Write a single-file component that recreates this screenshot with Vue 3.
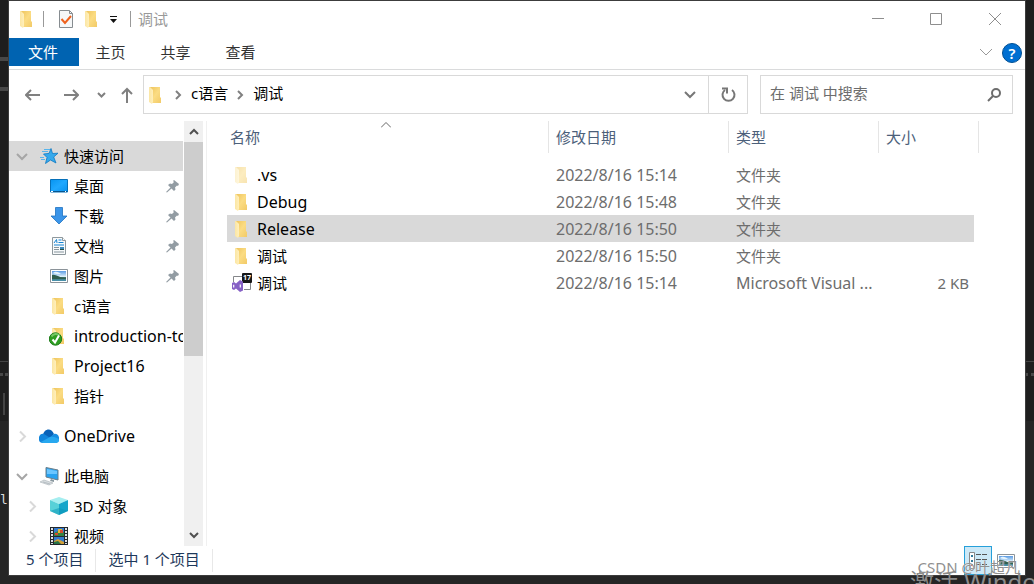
<script setup>
import { ref } from 'vue'

const tabs = ['主页', '共享', '查看']
const query = ref('')

const tree = [
  { label: '快速访问', icon: 'star', level: 0, arrow: 'down', selected: true },
  { label: '桌面', icon: 'desktop', level: 1, pinned: true },
  { label: '下载', icon: 'download', level: 1, pinned: true },
  { label: '文档', icon: 'document', level: 1, pinned: true },
  { label: '图片', icon: 'picture', level: 1, pinned: true },
  { label: 'c语言', icon: 'folder', level: 1 },
  { label: 'introduction-to', icon: 'folder-ok', level: 1 },
  { label: 'Project16', icon: 'folder', level: 1 },
  { label: '指针', icon: 'folder', level: 1 },
  { label: 'OneDrive', icon: 'cloud', level: 0, arrow: 'right', gap: true },
  { label: '此电脑', icon: 'computer', level: 0, arrow: 'down', gap: true },
  { label: '3D 对象', icon: 'cube', level: 1, arrow: 'right' },
  { label: '视频', icon: 'video', level: 1, arrow: 'right' },
]

const files = [
  { name: '.vs', date: '2022/8/16 15:14', type: '文件夹', size: '', icon: 'folder', faded: true },
  { name: 'Debug', date: '2022/8/16 15:48', type: '文件夹', size: '', icon: 'folder' },
  { name: 'Release', date: '2022/8/16 15:50', type: '文件夹', size: '', icon: 'folder', selected: true },
  { name: '调试', date: '2022/8/16 15:50', type: '文件夹', size: '', icon: 'folder' },
  { name: '调试', date: '2022/8/16 15:14', type: 'Microsoft Visual ...', size: '2 KB', icon: 'solution' },
]

// Latin-only strings are set one step larger to balance with the Chinese text
const isLatin = (text) => /^[\x20-\x7e]+$/.test(text)
</script>

<template>
  <div class="desktop">
    <svg class="sprite" aria-hidden="true">
      <defs>
        <linearGradient id="g-folder" x1="0" y1="0" x2="1" y2="1">
          <stop offset="0" stop-color="#eec45c" />
          <stop offset=".5" stop-color="#fbdc83" />
          <stop offset="1" stop-color="#f2ca67" />
        </linearGradient>
        <linearGradient id="g-flap" x1="0" y1="0" x2="1" y2="0">
          <stop offset="0" stop-color="#fbe6a4" />
          <stop offset="1" stop-color="#ffefbb" />
        </linearGradient>
        <linearGradient id="g-sky" x1="0" y1="0" x2="0" y2="1">
          <stop offset="0" stop-color="#5a9be4" />
          <stop offset=".55" stop-color="#dceffa" />
          <stop offset=".6" stop-color="#3d6d61" />
          <stop offset="1" stop-color="#4a95b4" />
        </linearGradient>
        <linearGradient id="g-blue" x1="0" y1="0" x2="1" y2="1">
          <stop offset="0" stop-color="#0794f0" />
          <stop offset=".5" stop-color="#20a8ff" />
          <stop offset="1" stop-color="#0991ee" />
        </linearGradient>
      </defs>
      <symbol id="i-folder" viewBox="0 0 20 20">
        <path d="M4 2h10v10l1 1v5H5z" fill="url(#g-folder)" />
        <path d="M3 2h1l3 3v12l-1 2-3-2z" fill="url(#g-flap)" />
      </symbol>
      <symbol id="i-folder-ok" viewBox="0 0 20 20">
        <use href="#i-folder" width="20" height="20" />
        <circle cx="6.500" cy="13" r="6.200" fill="#2f9e22" stroke="#1d7c19" />
        <path d="M2.500 10.500a5 5 0 0 1 8-1" fill="none" stroke="#76c765" stroke-width="2" />
        <path d="M3.500 13.500l2.500 3 4-7" fill="none" stroke="#fff" stroke-width="2" />
      </symbol>
      <symbol id="i-star" viewBox="0 0 20 20">
        <path d="M12 2.500l1.500 5 5.500-.3-4.300 3.800 2.300 6-5.500-3-5 3.500 1.500-6L4.500 8l5.500-.6z" fill="#35a9ec" stroke="#0d78c3" stroke-width=".8" stroke-linejoin="round" />
        <path d="M5 3.500h6M3 5.500h6M1 11.500h4M2 13.500h4" stroke="#57b5ed" stroke-width="1" />
      </symbol>
      <symbol id="i-desktop" viewBox="0 0 20 20">
        <path d="M1.500 3.500h17v12.500h-17z" fill="url(#g-blue)" stroke="#0670b9" />
        <path d="M2 15.500h16" stroke="#07558d" />
        <path d="M2 15.500h2M16 15.500h1" stroke="#fff" />
      </symbol>
      <symbol id="i-download" viewBox="0 0 20 20">
        <path d="M6.500 1.500h7v8.500h4.500L10 18 2 10h4.500z" fill="#3b95e9" stroke="#1e72c0" stroke-width=".8" />
      </symbol>
      <symbol id="i-document" viewBox="0 0 20 20">
        <path d="M3.500 1.500h10l3 3v14h-13z" fill="#f8fafb" stroke="#8e989d" />
        <path d="M13.500 1.500v3h3" fill="#fff" stroke="#8e989d" />
        <path d="M5 7l2.500-3.500L8 7M9.500 4h3M9.500 6.500h5M5 9h10" fill="none" stroke="#1784d3" />
        <path d="M5 11.500h5M5 13.500h5M5 16h10" stroke="#87959d" />
        <path d="M11 11h4v3h-4z" fill="#3c88bb" />
        <path d="M11 13h4v1h-4z" fill="#244f49" />
      </symbol>
      <symbol id="i-picture" viewBox="0 0 20 20">
        <path d="M1.500 3.500h17v13h-17z" fill="#fff" stroke="#8b9399" />
        <path d="M3 5h14v10H3z" fill="url(#g-sky)" />
        <path d="M3 9c4-1 7 3 14 3v1H3z" fill="#315f50" />
        <path d="M4 7c3-3 6 0 8 0-2 2-5 1-8 0z" fill="#e6f4fc" />
      </symbol>
      <symbol id="i-cloud" viewBox="1 0 20 16">
        <path d="M5 7C6 1 13-1 16 6l-3 4H3z" fill="#0862b8" />
        <path d="M1 12C0 8 3 5 6 6l8 5-9 4c-2 0-4-1-4-3z" fill="#1185dc" />
        <path d="M11 10l5-4c4-1 6 4 5 6l-7 1z" fill="#168ee2" />
        <path d="M3 14l9-5c4-1 6 1 9 2 1 2-1 4-3 4H5z" fill="#28a8ef" />
      </symbol>
      <symbol id="i-computer" viewBox="0 0 20 20">
        <path d="M7 1.500l12 2.500v10L7 11z" fill="#29a2ef" stroke="#6b7d88" />
        <path d="M8 3l10 2v3L8 8z" fill="#6bc6ff" />
        <path d="M12 13l3 1v2l-4-1z" fill="#8a989f" />
        <path d="M1 16l4-2 9 3-4 2z" fill="#d8dde0" stroke="#aab2b7" stroke-width=".6" />
        <path d="M4 16l7 2" stroke="#b5bdc2" />
      </symbol>
      <symbol id="i-cube" viewBox="0 0 20 20">
        <path d="M10 1l9 3-9 4-9-4z" fill="#a5eef0" />
        <path d="M1 4l9 4v11l-9-4z" fill="#57d1d8" />
        <path d="M10 8l9-4v11l-9 4z" fill="#16a5ca" />
        <path d="M10 12l9 3-9 4-9-4z" fill="#0793b5" opacity=".5" />
      </symbol>
      <symbol id="i-video" viewBox="0 0 20 20">
        <path d="M1 1h18v18H1z" fill="#24292d" />
        <path d="M3 2v16M17 2v16" stroke="#dce2e6" stroke-width="2" stroke-dasharray="2 1" />
        <path d="M5 2h10v8H5zM5 11h10v7H5z" fill="#347bcf" />
        <path d="M5 7l4-2 2 2 4-1v4H5z" fill="#348343" />
        <path d="M9 3h4v4H9z" fill="#e3b936" />
        <path d="M11 4h3v3h-3zM6 7h3v2H6z" fill="#d44b31" />
        <path d="M5 15l4-2 6 3v2H5z" fill="#d2a13a" />
        <path d="M5 16l4-1 3 3H5z" fill="#287347" />
      </symbol>
      <symbol id="i-solution" viewBox="0 0 20 20">
        <path d="M1.500 9V3.500H10M18.500 10v6.500H12" fill="none" stroke="#85878a" />
        <rect x="10" y="0" width="10" height="10" rx="1" fill="#171717" />
        <text x="15" y="7" class="badge">17</text>
        <path d="M0 10l2-1 2 1.500L8 7l3 1.500v9L8 19l-4-3.500L2 17l-2-1z" fill="#8661c5" />
        <path d="M1.700 11.800v2.600M8.300 11.500v3" stroke="#fff" stroke-width="1.200" />
      </symbol>
      <symbol id="i-pin" viewBox="0 0 14 14">
        <path d="M8 1l5 4-1 2-1-.5-2 2 .5 2L8 12 5.500 9.500 1 13.500 0 13l4.500-4.500L2 6l2-1.500 2 .5 2-2-1-1z" fill="#929ca3" />
      </symbol>
      <symbol id="i-down" viewBox="0 0 12 12">
        <path d="M1 4l5 5 5-5" fill="none" stroke="currentColor" stroke-width="2" />
      </symbol>
      <symbol id="i-right" viewBox="0 0 12 12">
        <path d="M4 1.500l5 5-5 5" fill="none" stroke="currentColor" stroke-width="2" />
      </symbol>
    </svg>

    <div class="backdrop" aria-hidden="true">
      <i class="bar bar-a"></i>
      <i class="bar bar-b"></i>
      <i class="rule"></i>
      <i class="dots"></i>
      <i class="lower"></i>
      <i class="caret"></i>
      <span class="code">la</span>
    </div>

    <main class="window">
      <header class="titlebar">
        <svg class="icon"><use href="#i-folder" /></svg>
        <i class="tick tick-a"></i>
        <button class="plain" aria-label="属性">
          <svg class="icon" viewBox="0 0 20 20">
            <path d="M3.500 1.500h10l3 3v14h-13z" fill="#f5f7f8" stroke="#868c90" />
            <path d="M13.500 1.500v3h3" fill="none" stroke="#868c90" />
            <path d="M5.500 10l3.500 4 6-7" fill="none" stroke="#ee611d" stroke-width="2" />
          </svg>
        </button>
        <button class="plain new-folder" aria-label="新建文件夹"><svg class="icon"><use href="#i-folder" /></svg></button>
        <button class="plain more" aria-label="自定义快速访问工具栏">
          <svg width="8" height="8" viewBox="0 0 8 8"><path d="M1 1h7v1H1zM1 4h7L4.500 8z" fill="#111" /></svg>
        </button>
        <i class="tick tick-b"></i>
        <h1>调试</h1>
        <div class="controls">
          <button class="plain" aria-label="最小化"><svg width="12" height="12"><path d="M0 5.500h12" stroke="#8e8e8e" /></svg></button>
          <button class="plain" aria-label="最大化"><svg width="12" height="12"><path d="M.5.5h11v11H.5z" fill="none" stroke="#8e8e8e" /></svg></button>
          <button class="plain" aria-label="关闭"><svg width="12" height="12"><path d="M0 0l12 12M12 0L0 12" stroke="#8e8e8e" /></svg></button>
        </div>
      </header>

      <nav class="ribbon">
        <button class="tab file">文件</button>
        <button v-for="tab in tabs" :key="tab" class="tab">{{ tab }}</button>
        <button class="plain expand" aria-label="展开功能区">
          <svg width="12" height="8" viewBox="0 0 12 8"><path d="M0 1l6 6 6-6" fill="none" stroke="#999" /></svg>
        </button>
        <button class="plain help" aria-label="帮助">?</button>
      </nav>

      <div class="toolbar">
        <button class="plain back" aria-label="后退">
          <svg width="16" height="12" viewBox="0 0 16 12"><path d="M15 6H1M6 1L1 6l5 5" fill="none" stroke="#808080" stroke-width="2" /></svg>
        </button>
        <button class="plain forward" aria-label="前进">
          <svg width="16" height="12" viewBox="0 0 16 12"><path d="M1 6h14M10 1l5 5-5 5" fill="none" stroke="#808080" stroke-width="2" /></svg>
        </button>
        <button class="plain recent" aria-label="最近位置">
          <svg width="9" height="6" viewBox="0 0 9 6"><path d="M1 1l3.500 3.500L8 1" fill="none" stroke="#808080" stroke-width="2" /></svg>
        </button>
        <button class="plain up" aria-label="上移">
          <svg width="12" height="16" viewBox="0 0 12 16"><path d="M6 16V2M1 7l5-5 5 5" fill="none" stroke="#808080" stroke-width="2" /></svg>
        </button>
        <div class="address">
          <svg class="icon"><use href="#i-folder" /></svg>
          <svg class="sep" width="7" height="10" viewBox="0 0 7 10"><path d="M1 1l4 4-4 4" fill="none" stroke="#808080" stroke-width="2" /></svg>
          <a href="#">c语言</a>
          <svg class="sep" width="7" height="10" viewBox="0 0 7 10"><path d="M1 1l4 4-4 4" fill="none" stroke="#808080" stroke-width="2" /></svg>
          <a href="#">调试</a>
          <button class="plain history" aria-label="以前的位置">
            <svg width="12" height="8" viewBox="0 0 12 8"><path d="M1 1l5 5 5-5" fill="none" stroke="#777" stroke-width="2" /></svg>
          </button>
          <button class="plain refresh" aria-label="刷新">
            <svg width="16" height="16" viewBox="0 0 16 16"><path d="M12 3a6 6 0 1 1-7 0" fill="none" stroke="#777" stroke-width="2" /><path d="M2 1.500h5v5" fill="none" stroke="#777" stroke-width="2" /></svg>
          </button>
        </div>
        <label class="search">
          <input v-model="query" type="text" placeholder="在 调试 中搜索" aria-label="在 调试 中搜索" />
          <svg width="14" height="14" viewBox="0 0 14 14"><circle cx="9" cy="5" r="4" fill="none" stroke="#6d6d6d" stroke-width="2" /><path d="M6 8l-5 5" stroke="#6d6d6d" stroke-width="2" /></svg>
        </label>
      </div>

      <div class="content">
        <aside class="sidebar">
          <div class="tree">
            <a
              v-for="item in tree"
              :key="item.label"
              href="#"
              class="node"
              :class="['level-' + item.level, { selected: item.selected, gap: item.gap }]"
            >
              <span class="twisty" :class="item.arrow">
                <svg v-if="item.arrow" width="12" height="12"><use :href="'#i-' + item.arrow" /></svg>
              </span>
              <svg class="icon"><use :href="'#i-' + item.icon" /></svg>
              <span class="label" :class="{ latin: isLatin(item.label) }">{{ item.label }}</span>
              <svg v-if="item.pinned" class="pin"><use href="#i-pin" /></svg>
            </a>
          </div>
          <div class="scrollbar">
            <button class="plain" aria-label="向上滚动"><svg width="10" height="7" viewBox="0 0 10 7"><path d="M1 6l4-4 4 4" fill="none" stroke="#505050" stroke-width="2" /></svg></button>
            <div class="track"><div class="thumb"></div></div>
            <button class="plain" aria-label="向下滚动"><svg width="10" height="7" viewBox="0 0 10 7"><path d="M1 1l4 4 4-4" fill="none" stroke="#505050" stroke-width="2" /></svg></button>
          </div>
        </aside>

        <section class="list">
          <table>
            <colgroup>
              <col class="c-name" /><col class="c-date" /><col class="c-type" /><col class="c-size" />
            </colgroup>
            <thead>
              <tr>
                <th scope="col">
                  <div>名称</div>
                  <svg class="sort" width="10" height="6" viewBox="0 0 10 6"><path d="M0 5.500l5-5 5 5" fill="none" stroke="#666" /></svg>
                </th>
                <th scope="col"><div>修改日期</div></th>
                <th scope="col"><div>类型</div></th>
                <th scope="col"><div>大小</div></th>
              </tr>
            </thead>
            <tbody>
              <tr v-for="(file, i) in files" :key="i" :class="{ selected: file.selected }">
                <td>
                  <div class="name">
                    <svg class="icon" :class="{ faded: file.faded }"><use :href="'#i-' + file.icon" /></svg>
                    <span :class="{ latin: isLatin(file.name) }">{{ file.name }}</span>
                  </div>
                </td>
                <td class="latin">{{ file.date }}</td>
                <td :class="{ latin: isLatin(file.type) }">{{ file.type }}</td>
                <td>{{ file.size }}</td>
              </tr>
            </tbody>
          </table>
        </section>
      </div>

      <footer class="status">
        <span class="count">5 个项目</span>
        <span class="chosen">选中 1 个项目</span>
        <div class="views">
          <button class="plain view active" aria-label="详细信息">
            <svg width="20" height="20" viewBox="0 0 20 20">
              <path d="M1.500 1.500h5v16h-5z" fill="#fff" stroke="#888" />
              <path d="M3 4h2v2H3zM3 9h2v2H3z" fill="#347b9c" /><path d="M3 13h2v2H3z" fill="#c34e33" />
              <path d="M8 3.500h5M14 3.500h5M8 8.500h5M14 8.500h5M8 13.500h5M14 13.500h5" stroke="#555" />
            </svg>
          </button>
          <button class="plain view" aria-label="大缩略图"><svg class="icon"><use href="#i-picture" /></svg></button>
        </div>
      </footer>
    </main>

    <div class="credit">CSDN @叶超凡</div>
    <div class="activate">激活 Windows</div>
  </div>
</template>

<style>
html,
body {
  margin: 0;
  overflow: hidden;
}
</style>

<style scoped>
* {
  box-sizing: border-box;
}

.desktop {
  position: relative;
  display: flex;
  height: 100vh;
  padding: 1px 9px 9px;
  overflow: hidden;
  background: #1e1e1e;
  font: 15px/20px "Noto Sans", "Noto Sans CJK SC", sans-serif;
  color: #000;
}

.sprite {
  position: absolute;
  width: 0;
  height: 0;
}

.badge {
  fill: #fff;
  font-size: 7px;
  font-weight: 700;
  text-anchor: middle;
}

a {
  color: inherit;
  text-decoration: none;
}

.latin {
  font-size: 16px;
}

.plain {
  display: flex;
  align-items: center;
  justify-content: center;
  padding: 0;
  border: 0;
  background: none;
  font: inherit;
}

.icon {
  flex: none;
  width: 20px;
  height: 20px;
}

/* editor strip showing around the window */
.backdrop {
  position: absolute;
  inset: 0;
}

.backdrop > * {
  position: absolute;
}

.bar {
  left: 0;
  width: 9px;
  height: 4px;
  background: #484848;
}

.bar-a {
  top: 57px;
}

.bar-b {
  top: 87px;
}

.rule {
  top: 361px;
  width: 100%;
  height: 1px;
  background: #444;
}

.dots {
  top: 373px;
  width: 100%;
  border-top: 3px dotted #484848;
}

.lower {
  top: 421px;
  bottom: 0;
  width: 100%;
  background: #252525;
}

.caret {
  top: 393px;
  left: 3px;
  width: 2px;
  height: 22px;
  background: #444;
}

.code {
  top: 490px;
  left: 0;
  color: #ddd;
  font: 13px/20px "DejaVu Sans Mono", monospace;
}

.window {
  position: relative;
  display: flex;
  flex: 1;
  flex-direction: column;
  min-width: 0;
  background: #fff;
  outline: 1px solid #3c3c3c;
}

.titlebar {
  display: flex;
  flex: none;
  align-items: center;
  height: 37px;
  padding: 0 0 1px 8px;
}

.tick {
  width: 1px;
  height: 16px;
  background: #999;
}

.tick-a {
  margin: 0 12px 0 6px;
}

.tick-b {
  margin: 0 7px 0 13px;
}

.new-folder {
  margin-left: 6px;
}

.more {
  margin-left: 7px;
}

h1 {
  margin: 0;
  color: #999;
  font-size: 15px;
  font-weight: 400;
}

.controls {
  display: flex;
  margin-left: auto;
}

.controls .plain {
  width: 58px;
  height: 36px;
}

.controls .plain:last-child {
  width: 60px;
}

.ribbon {
  display: flex;
  flex: none;
  height: 32px;
  border-bottom: 1px solid #dadbdc;
}

.tab {
  width: 65px;
  height: 28px;
  padding: 0 2px 0 0;
  border: 0;
  background: none;
  color: #333;
  font: inherit;
}

.file {
  width: 70px;
  background: #0063b1;
  color: #fff;
}

.expand {
  width: 24px;
  height: 28px;
  margin-left: auto;
}

.help {
  width: 20px;
  height: 20px;
  margin: 5px 3px 0 4px;
  border: 1px solid #004f93;
  border-radius: 50%;
  background: #006fd1;
  color: #fff;
  font-weight: 600;
}

.toolbar {
  display: flex;
  flex: none;
  align-items: center;
  height: 49px;
  margin-bottom: 2px;
  padding-right: 12px;
}

.back {
  width: 16px;
  margin-left: 16px;
}

.forward {
  width: 16px;
  margin-left: 22px;
}

.recent {
  width: 9px;
  margin-left: 18px;
}

.up {
  width: 12px;
  margin-left: 15px;
}

.address {
  display: flex;
  flex: 1;
  align-items: center;
  height: 39px;
  margin-left: 10px;
  padding-left: 2px;
  border: 1px solid #d9d9d9;
}

.address a {
  padding-bottom: 3px;
}

.sep {
  margin: 0 9px;
}

.history {
  width: 36px;
  height: 37px;
  margin-left: auto;
}

.refresh {
  width: 39px;
  height: 37px;
  border-left: 1px solid #d9d9d9;
}

.search {
  display: flex;
  align-items: center;
  width: 253px;
  height: 39px;
  margin-left: 12px;
  padding: 0 11px 0 9px;
  border: 1px solid #d9d9d9;
}

.search input {
  flex: 1;
  min-width: 0;
  padding: 0 0 3px;
  border: 0;
  outline: 0;
  background: none;
  font: inherit;
}

.search input::placeholder {
  color: #6d6d6d;
  opacity: 1;
}

.content {
  display: flex;
  flex: 1;
  min-height: 0;
}

.sidebar {
  display: flex;
  flex: none;
  width: 198px;
  padding-right: 3px;
  border-right: 1px solid #f0f0f0;
}

.tree {
  flex: 1;
  min-width: 0;
  padding-top: 20px;
  overflow: hidden;
}

.node {
  display: flex;
  align-items: center;
  height: 30px;
  margin-right: 1px;
  padding-left: 7px;
  overflow: hidden;
  white-space: nowrap;
}

.level-1 {
  padding-left: 17px;
}

.node.gap {
  margin-top: 10px;
}

.node.selected {
  background: #d9d9d9;
}

.twisty {
  display: flex;
  flex: none;
  width: 23px;
}

.twisty.down {
  color: #a6a6a6;
}

.twisty.right {
  color: #d9d9d9;
}

.label {
  flex: 1;
  margin-left: 5px;
}

.pin {
  width: 14px;
  height: 14px;
  margin-right: 3px;
}

.scrollbar {
  display: flex;
  flex-direction: column;
  width: 19px;
  background: #f0f0f0;
}

.scrollbar .plain {
  height: 21px;
}

.track {
  flex: 1;
}

.thumb {
  height: 56%;
  background: #cdcdcd;
}

.list {
  flex: 1;
  min-width: 0;
  padding-left: 20px;
}

table {
  border-spacing: 0;
  table-layout: fixed;
  width: 752px;
}

.c-name {
  width: 322px;
}

.c-date {
  width: 180px;
}

.c-type {
  width: 150px;
}

.c-size {
  width: 100px;
}

th {
  position: relative;
  height: 40px;
  padding: 0;
  color: #4c607a;
  font-weight: 400;
  text-align: left;
  vertical-align: top;
}

th div {
  padding: 6px 7px;
  border-right: 1px solid #e5e5e5;
}

th:first-child div {
  padding-left: 3px;
}

.sort {
  position: absolute;
  top: 1px;
  left: 154px;
}

td {
  height: 27px;
  padding: 0 10px 0 7px;
  overflow: hidden;
  color: #6d6d6d;
  white-space: nowrap;
}

td:nth-child(3) {
  padding-right: 0;
}

td:last-child {
  text-align: right;
}

td:first-child {
  padding-left: 5px;
  color: #000;
}

.name {
  display: flex;
  align-items: center;
  gap: 5px;
}

.faded {
  opacity: .5;
}

.selected td {
  background: #d9d9d9;
}

.selected td:last-child {
  background: linear-gradient(#d9d9d9, #d9d9d9) left / calc(100% - 5px) 100% no-repeat;
}

.status {
  display: flex;
  flex: none;
  align-items: center;
  height: 29px;
  color: #1e395b;
}

.status span {
  padding-bottom: 3px;
  border-right: 1px solid #e8e8e8;
}

.status .count {
  padding-right: 12px;
  padding-left: 17px;
}

.status .chosen {
  padding-right: 12px;
  padding-left: 12px;
}

.views {
  display: flex;
  margin-left: auto;
  padding-right: 5px;
}

.view {
  width: 28px;
  height: 29px;
}

.active {
  border: 1px solid #26a0da;
  background: #cce8f6;
}

.credit,
.activate {
  position: absolute;
  white-space: nowrap;
  pointer-events: none;
}

.credit {
  right: 14px;
  bottom: 7px;
  color: #909090;
  font-size: 15px;
  text-shadow: 0 0 1px #fff;
}

.activate {
  top: 567px;
  left: 910px;
  color: #8b8b8b;
  font-size: 24px;
  line-height: 30px;
}
</style>
